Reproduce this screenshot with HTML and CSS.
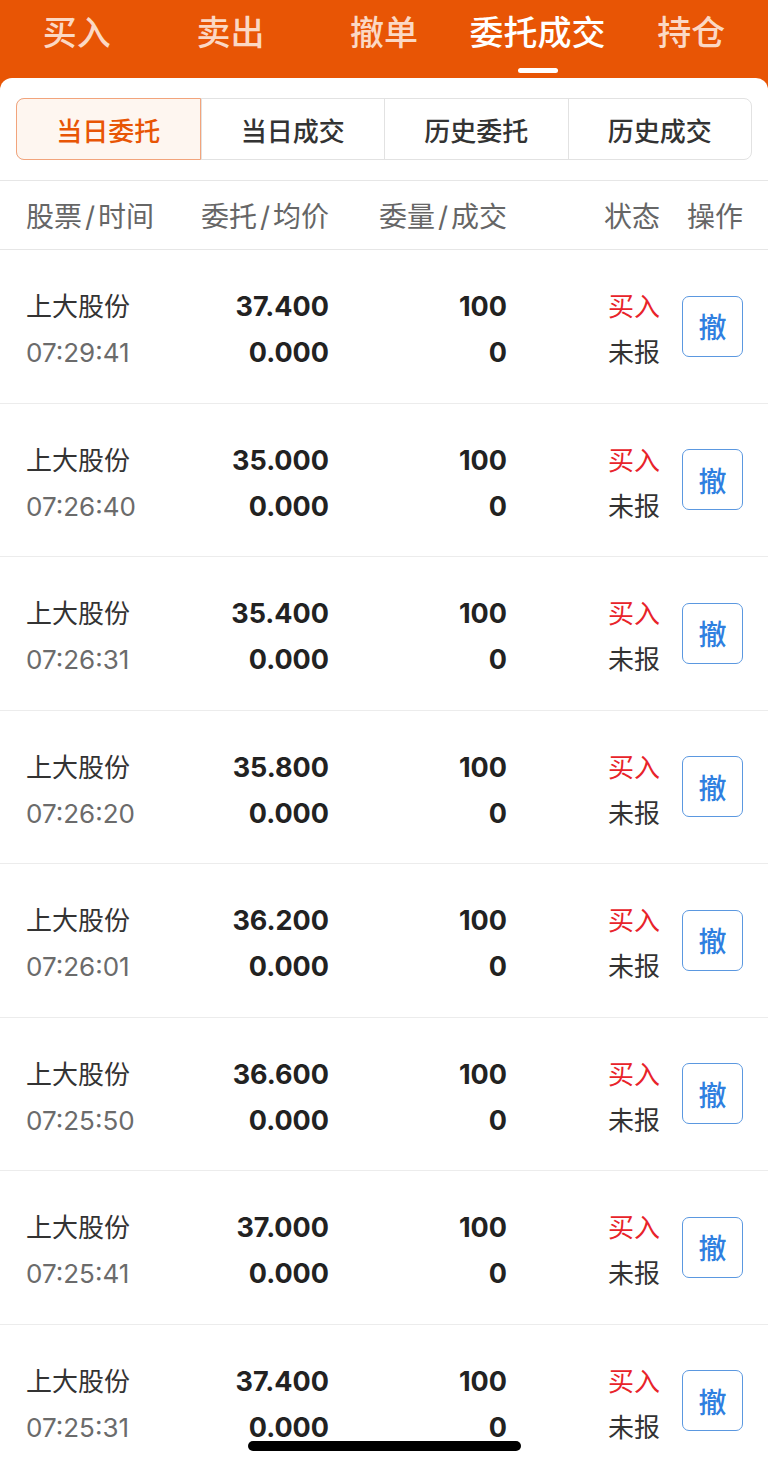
FILE: index.html
```html
<!DOCTYPE html>
<html lang="zh-CN">
<head>
    <meta charset="UTF-8">
    <meta name="viewport" content="width=device-width, initial-scale=1.0">
    <title>委托成交</title>
    <link rel="stylesheet" href="styles.css">
</head>
<body>
    <div id="topTabs">
        <div class="top-tab"><span class="top-label">买入</span></div>
        <div class="top-tab"><span class="top-label">卖出</span></div>
        <div class="top-tab"><span class="top-label">撤单</span></div>
        <div class="top-tab active"><span class="top-label">委托成交</span><span class="indicator"></span></div>
        <div class="top-tab"><span class="top-label">持仓</span></div>
    </div>

    <div id="card">
        <div class="segments">
            <div class="segment active">当日委托</div>
            <div class="segment">当日成交</div>
            <div class="segment">历史委托</div>
            <div class="segment">历史成交</div>
        </div>

        <div class="table-head">
            <div class="col-name">股票<span class="slash">/</span>时间</div>
            <div class="col-num">委托<span class="slash">/</span>均价</div>
            <div class="col-num">委量<span class="slash">/</span>成交</div>
            <div class="col-num">状态</div>
            <div class="col-num">操作</div>
        </div>

        <div id="orderList"></div>
    </div>

    <div class="home-bar"></div>

    <script>
        // today's orders, all still unreported
        const orders = [
            ['37.400', '07:29:41'],
            ['35.000', '07:26:40'],
            ['35.400', '07:26:31'],
            ['35.800', '07:26:20'],
            ['36.200', '07:26:01'],
            ['36.600', '07:25:50'],
            ['37.000', '07:25:41'],
            ['37.400', '07:25:31']
        ];

        const list = document.getElementById('orderList');

        orders.forEach(([price, time]) => {
            const row = document.createElement('div');
            row.className = 'order-row';
            row.innerHTML = `
                <div class="col-name">
                    <div class="line name">上大股份</div>
                    <div class="line time">${time}</div>
                </div>
                <div class="col-num">
                    <div class="line num">${price}</div>
                    <div class="line num">0.000</div>
                </div>
                <div class="col-num">
                    <div class="line num">100</div>
                    <div class="line num">0</div>
                </div>
                <div class="col-num">
                    <div class="line buy">买入</div>
                    <div class="line status">未报</div>
                </div>
                <div class="col-num">
                    <button class="cancel-btn">撤</button>
                </div>`;
            list.appendChild(row);
        });
    </script>
</body>
</html>
```

FILE: styles.css
```css
body {
    margin: 0;
    height: 1468px;
    overflow: hidden;
    background-color: #e85505;
    font-family: Inter, "Noto Sans CJK SC", sans-serif;
    color: #333;
}

/* orange tab bar */
#topTabs {
    display: flex;
    height: 78px;
}

.top-tab {
    flex: 1;
    display: flex;
    flex-direction: column;
    align-items: center;
    padding-top: 12px;
    box-sizing: border-box;
}

.top-label {
    font-size: 34px;
    line-height: 42px;
    color: #fbd8c4;
    font-weight: 500;
}

.top-tab.active .top-label {
    color: #fff;
}

.indicator {
    margin-top: 14px;
    width: 40px;
    height: 5px;
    border-radius: 3px;
    background-color: #fff;
}

/* white sheet */
#card {
    background-color: #fff;
    border-radius: 12px 12px 0 0;
    padding-top: 20px;
    min-height: 1390px;
}

.segments {
    display: flex;
    margin: 0 16px 20px;
    height: 62px;
    border: 1px solid #e2e2e2;
    border-radius: 8px;
    box-sizing: border-box;
}

.segment {
    flex: 1;
    display: flex;
    align-items: center;
    justify-content: center;
    font-size: 26px;
    color: #333;
    font-weight: 500;
    border-left: 1px solid #e2e2e2;
}

.segment:first-child {
    border-left: none;
}

.segment.active {
    margin: -1px 0 -1px -1px;
    background-color: #fef6f0;
    border: 1px solid #f2a47c;
    border-radius: 8px 0 0 8px;
    color: #e85505;
}

/* table */
.table-head,
.order-row {
    display: grid;
    grid-template-columns: 130px 173px 178px 153px 83px;
    padding: 0 25px 0 26px;
    align-items: center;
}

.table-head {
    height: 70px;
    border-top: 1px solid #e6e6e6;
    border-bottom: 1px solid #e6e6e6;
    box-sizing: border-box;
    font-size: 28px;
    color: #666;
}

.table-head .col-name,
.table-head .col-num {
    display: block;
    white-space: nowrap;
}

.slash {
    margin: 0 3px;
}

.col-num {
    text-align: right;
    display: flex;
    flex-direction: column;
    align-items: flex-end;
}

.order-row {
    height: 153.5px;
    border-bottom: 1px solid #ececec;
    box-sizing: border-box;
    padding-top: 8px;
}

.line {
    line-height: 46px;
    font-size: 26px;
    white-space: nowrap;
}

.name {
    color: #333;
}

.time {
    color: #6b6b6b;
}

.num {
    font-size: 27px;
    font-weight: 700;
    color: #222;
}

.buy {
    color: #e8232a;
}

.status {
    color: #333;
}

.cancel-btn {
    width: 61px;
    height: 61px;
    margin-top: -8px;
    padding: 0;
    border: 1.5px solid #5b98e0;
    border-radius: 7px;
    background-color: #fff;
    color: #2f7fe0;
    font-family: "Noto Sans CJK SC", sans-serif;
    font-size: 28px;
    font-weight: 500;
}

/* iOS home indicator */
.home-bar {
    position: fixed;
    bottom: 17px;
    left: 248px;
    width: 273px;
    height: 10px;
    border-radius: 5px;
    background-color: #000;
}
```
